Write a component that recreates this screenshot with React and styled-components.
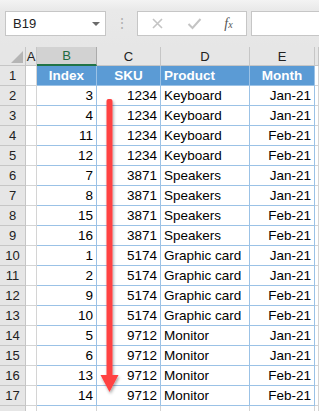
import React from 'react';
import styled, { createGlobalStyle } from 'styled-components';

const Global = createGlobalStyle`
  body { margin: 0; background: #fff; font-family: "Liberation Sans", Arial, sans-serif; }
`;

const rows = [
  [3, 1234, 'Keyboard', 'Jan-21'],
  [4, 1234, 'Keyboard', 'Jan-21'],
  [11, 1234, 'Keyboard', 'Feb-21'],
  [12, 1234, 'Keyboard', 'Feb-21'],
  [7, 3871, 'Speakers', 'Jan-21'],
  [8, 3871, 'Speakers', 'Jan-21'],
  [15, 3871, 'Speakers', 'Feb-21'],
  [16, 3871, 'Speakers', 'Feb-21'],
  [1, 5174, 'Graphic card', 'Jan-21'],
  [2, 5174, 'Graphic card', 'Jan-21'],
  [9, 5174, 'Graphic card', 'Feb-21'],
  [10, 5174, 'Graphic card', 'Feb-21'],
  [5, 9712, 'Monitor', 'Jan-21'],
  [6, 9712, 'Monitor', 'Jan-21'],
  [13, 9712, 'Monitor', 'Feb-21'],
  [14, 9712, 'Monitor', 'Feb-21'],
];

const App = () => {
  return (
    <Page>
      <Global />
      <Toolbar>
        <NameBox>
          <span>B19</span>
          <Caret />
        </NameBox>
        <Grip>⋮</Grip>
        <FxBox>
          <FxIcon>
            <svg width="13" height="13" viewBox="0 0 13 13">
              <path d="M2 2 L11 11 M11 2 L2 11" stroke="#c4c4c4" strokeWidth="1.6" fill="none" />
            </svg>
          </FxIcon>
          <FxIcon>
            <svg width="15" height="13" viewBox="0 0 15 13">
              <path d="M1.5 7 L5.5 11 L13.5 2" stroke="#c4c4c4" strokeWidth="2" fill="none" />
            </svg>
          </FxIcon>
          <FxLabel>f<sub>x</sub></FxLabel>
        </FxBox>
        <Formula />
      </Toolbar>
      <Sheet>
        <Grid>
          <Corner>
            <svg width="12" height="12" viewBox="0 0 12 12">
              <path d="M12 0 L12 12 L0 12 Z" fill="#b5b5b5" />
            </svg>
          </Corner>
          <ColHead>A</ColHead>
          <ColHead selected>B</ColHead>
          <ColHead>C</ColHead>
          <ColHead>D</ColHead>
          <ColHead>E</ColHead>
          <ColHead />

          <RowHead>1</RowHead>
          <Cell />
          <HeadCell>Index</HeadCell>
          <HeadCell>SKU</HeadCell>
          <HeadCell left>Product</HeadCell>
          <HeadCell>Month</HeadCell>
          <Cell />

          {rows.map((r, i) => (
            <React.Fragment key={i}>
              <RowHead>{i + 2}</RowHead>
              <Cell />
              <DataCell>{r[0]}</DataCell>
              <DataCell>{r[1]}</DataCell>
              <DataCell left>{r[2]}</DataCell>
              <DataCell>{r[3]}</DataCell>
              <Cell />
            </React.Fragment>
          ))}
          <RowHead />
          <Cell />
          <Cell />
          <Cell />
          <Cell />
          <Cell />
          <Cell />
        </Grid>
        <Arrow>
          <svg width="26" height="310" viewBox="0 0 26 310">
            <defs>
              <filter id="sh" x="-50%" y="-10%" width="200%" height="120%">
                <feDropShadow dx="1" dy="2" stdDeviation="1.5" floodColor="#000" floodOpacity="0.35" />
              </filter>
            </defs>
            <g filter="url(#sh)">
              <rect x="9.5" y="2" width="6" height="278" rx="2" fill="#ff4242" />
              <path d="M3.5 278 L21.5 278 L12.5 295 Z" fill="#ff4242" />
            </g>
          </svg>
        </Arrow>
      </Sheet>
    </Page>
  );
};

export default App;

const Page = styled.div`
  width: 319px;
  height: 411px;
  overflow: hidden;
  background: #fff;
`;

const Toolbar = styled.div`
  height: 47px;
  box-sizing: border-box;
  padding: 11px 0 0 5px;
  background: linear-gradient(#f3f3f3, #e9e9e9 10px, #e6e6e6);
  display: flex;
  align-items: flex-start;
`;

const NameBox = styled.div`
  width: 101px;
  height: 25px;
  box-sizing: border-box;
  background: #fff;
  border: 1px solid #c6c6c6;
  display: flex;
  align-items: center;
  justify-content: space-between;
  padding: 0 5px 0 7px;
  font-size: 13px;
  color: #222;
`;

const Caret = styled.span`
  width: 0;
  height: 0;
  border-left: 4px solid transparent;
  border-right: 4px solid transparent;
  border-top: 4px solid #6a6a6a;
`;

const Grip = styled.div`
  width: 31px;
  text-align: center;
  color: #b0b0b0;
  font-size: 14px;
  line-height: 25px;
`;

const FxBox = styled.div`
  width: 110px;
  height: 25px;
  box-sizing: border-box;
  background: #fff;
  border: 1px solid #c6c6c6;
  display: flex;
  align-items: center;
  justify-content: space-around;
  padding: 0 2px 0 2px;
`;

const FxIcon = styled.span`
  display: flex;
  align-items: center;
`;

const FxLabel = styled.span`
  font-family: "Liberation Serif", serif;
  font-style: italic;
  font-size: 14px;
  color: #555;
  sub {
    font-size: 10px;
    vertical-align: baseline;
  }
`;

const Formula = styled.div`
  margin-left: 4px;
  flex: 1;
  height: 25px;
  box-sizing: border-box;
  background: #fff;
  border: 1px solid #c6c6c6;
  border-right: none;
`;

const Sheet = styled.div`
  position: relative;
`;

const Grid = styled.div`
  display: grid;
  grid-template-columns: 26px 11px 60px 64px 89px 65px 1fr;
  grid-auto-rows: 20px;
  grid-template-rows: 19px;
  font-size: 13.5px;
  color: #000;
`;

const Corner = styled.div`
  background: #e6e6e6;
  border-right: 1px solid #c6c6c6;
  border-bottom: 1px solid #c6c6c6;
  display: flex;
  align-items: flex-end;
  justify-content: flex-end;
  padding: 0 2px 2px 0;
`;

const ColHead = styled.div`
  background: ${p => (p.selected ? '#d2d2d2' : '#e6e6e6')};
  color: ${p => (p.selected ? '#1f6b40' : '#222')};
  border-right: 1px solid ${p => (p.selected ? '#ababab' : '#c6c6c6')};
  border-bottom: ${p => (p.selected ? '2px solid #217346' : '1px solid #c6c6c6')};
  display: flex;
  align-items: center;
  justify-content: center;
  font-size: 13px;
`;

const RowHead = styled.div`
  background: #e6e6e6;
  color: #222;
  border-right: 1px solid #c6c6c6;
  border-bottom: 1px solid #c6c6c6;
  display: flex;
  align-items: center;
  justify-content: center;
  font-size: 13px;
`;

const Cell = styled.div`
  border-right: 1px solid #d4d4d4;
  border-bottom: 1px solid #d4d4d4;
`;

const HeadCell = styled.div`
  background: #5b9bd5;
  color: #fff;
  font-weight: bold;
  border-right: 1px solid #9bc2e6;
  border-bottom: 1px solid #9bc2e6;
  display: flex;
  align-items: center;
  justify-content: ${p => (p.left ? 'flex-start' : 'center')};
  padding: 0 3px;
`;

const DataCell = styled.div`
  border-right: 1px solid #9bc2e6;
  border-bottom: 1px solid #9bc2e6;
  display: flex;
  align-items: center;
  justify-content: ${p => (p.left ? 'flex-start' : 'flex-end')};
  padding: 0 3px;
  white-space: nowrap;
`;

const Arrow = styled.div`
  position: absolute;
  left: 97px;
  top: 50px;
  pointer-events: none;
`;
